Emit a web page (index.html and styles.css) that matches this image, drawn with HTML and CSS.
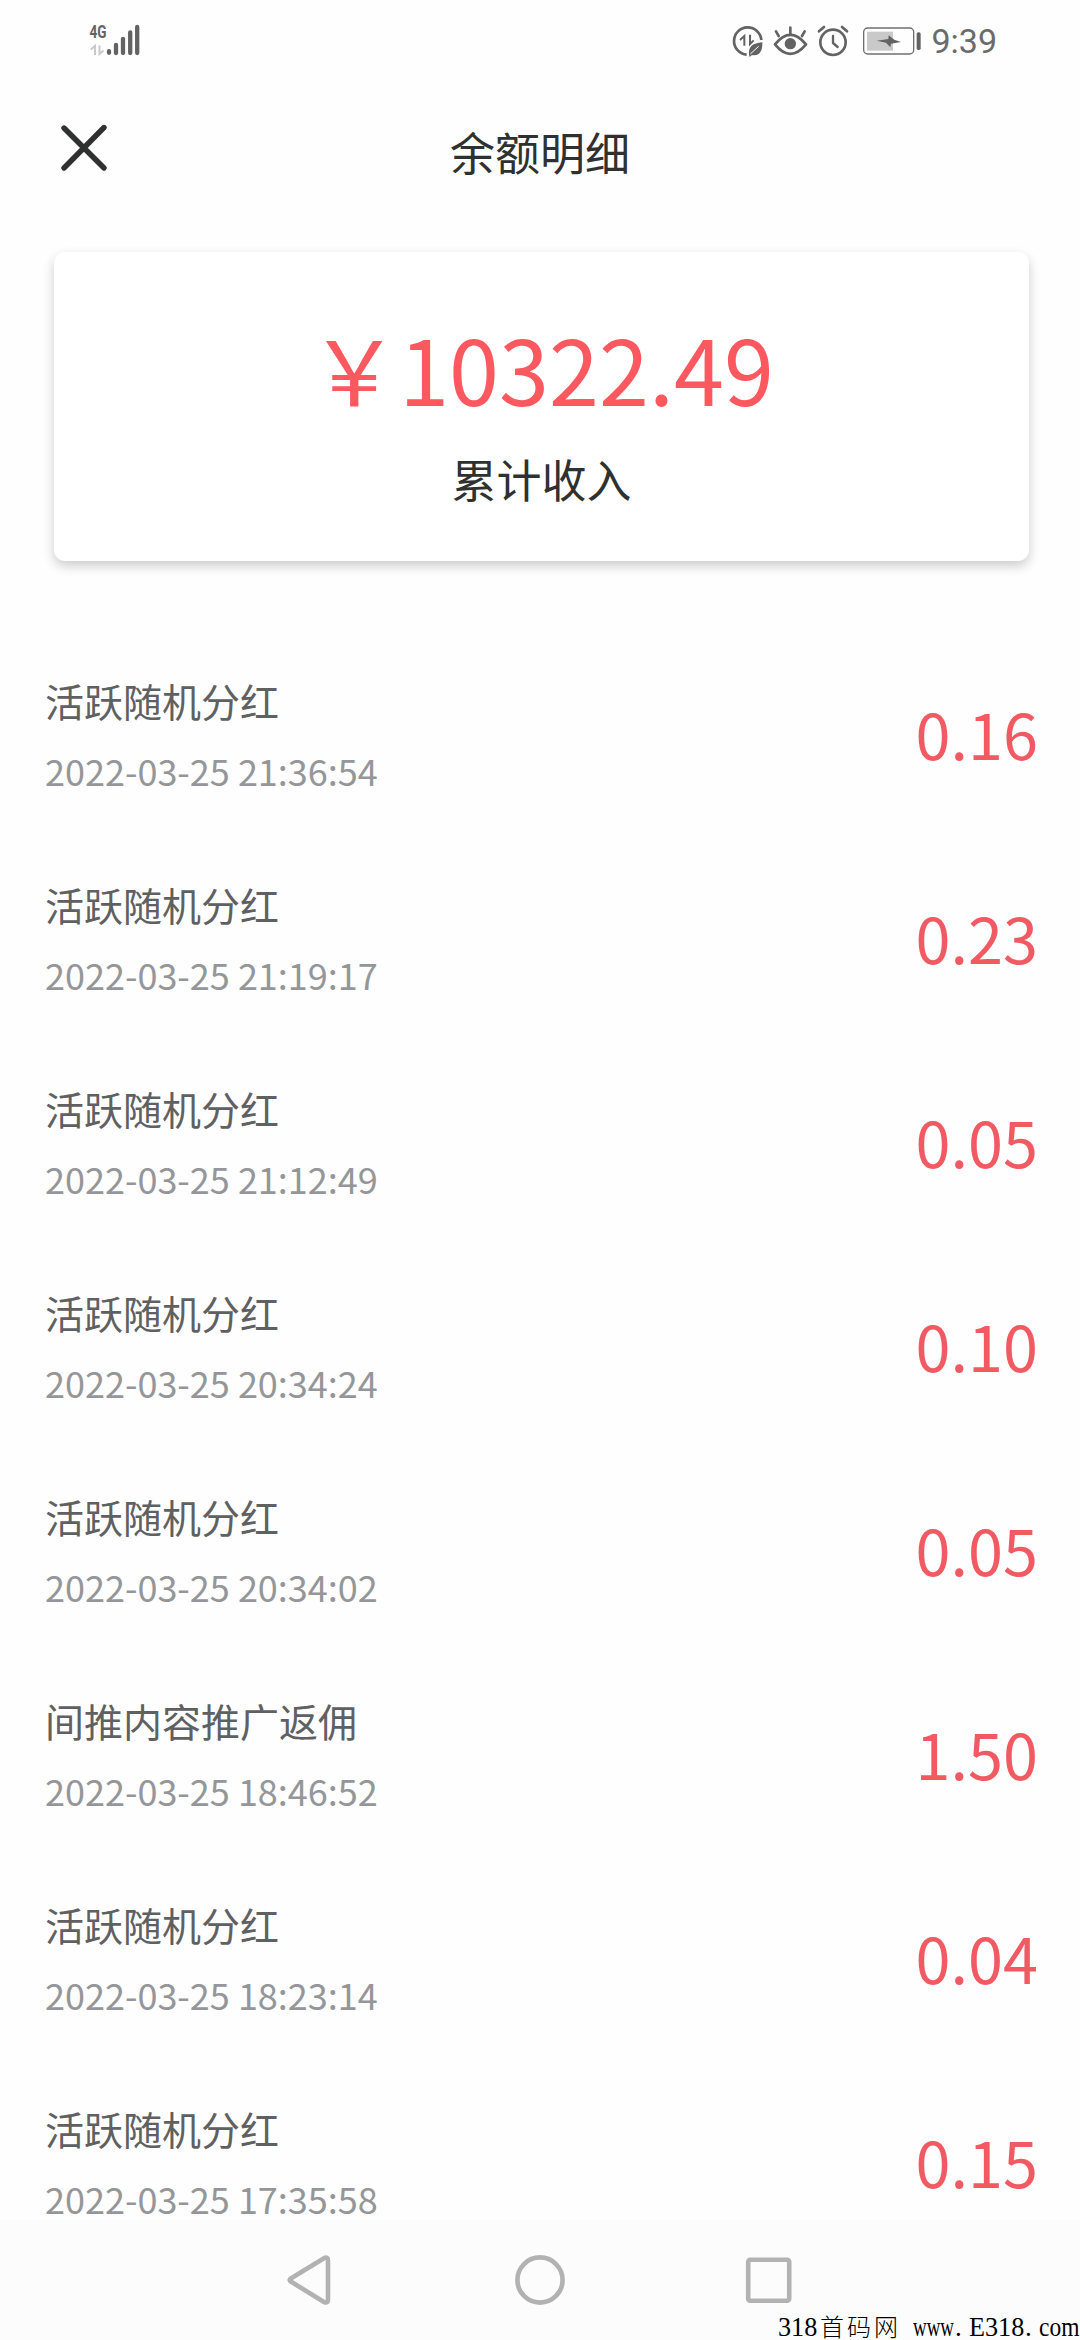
FILE: index.html
```html
<!DOCTYPE html>
<html lang="zh-CN">
<head>
<meta charset="utf-8">
<title>余额明细</title>
<link rel="stylesheet" href="styles.css">
</head>
<body>
<div class="screen">
  <div class="status">
    <svg class="signal" width="62" height="48" viewBox="83 16 62 48">
      <text x="89.5" y="38.4" class="net" textLength="17" lengthAdjust="spacingAndGlyphs">4G</text>
      <path d="M90.800 49.500L95 46V55M99.500 45.500V54L103.500 50.500" fill="none" stroke="#c9c9c9" stroke-width="2"/>
      <g stroke="#636363" stroke-width="4.300" stroke-linecap="round"><path d="M109 51.200v1.600M116 45v8M123 39v14M130.200 32.500v20.500M137.200 27v26"/></g>
    </svg>
    <div class="status-right">
      <svg width="33" height="33" viewBox="60 40 99 99" fill="none" stroke="#636363">
        <path d="M107 132a41 41 0 1 1 44-44" stroke-width="8"/>
        <path d="M87 88l13-12v29M117 72v28l11-11" stroke-width="6"/>
        <path d="M114 132c-2-22 8-34 40-37 1 27-9 42-31 38l-7 6z" fill="#636363" stroke="none"/>
        <path d="M118 130l25-23" stroke="#fff" stroke-width="3"/>
      </svg>
      <svg width="35" height="33" viewBox="186 40 105 99" fill="none" stroke="#636363">
        <path d="M192 101q46-57 93 0q-47 57-93 0z" stroke-width="8" stroke-linejoin="round"/>
        <circle cx="238" cy="99" r="17" fill="#636363" stroke="none"/>
        <path d="M238 51v18M195 62l8 14M281 62l-8 14" stroke-width="8" stroke-linecap="round"/>
      </svg>
      <svg width="32" height="33" viewBox="321 40 96 99" fill="none" stroke="#636363">
        <circle cx="369" cy="95" r="38" stroke-width="8"/>
        <path d="M369 76v21l14 12" stroke-width="7" stroke-linecap="round" stroke-linejoin="round"/>
        <path d="M327 62l15-13M411 62l-15-13" stroke-width="8" stroke-linecap="round"/>
      </svg>
      <svg class="battery" width="59" height="33" viewBox="459 40 177 99">
        <rect x="461" y="52" width="150" height="78" rx="12" fill="none" stroke="#707070" stroke-width="4"/>
        <rect x="471" y="63" width="78" height="57" fill="#c9c9c9"/>
        <path d="M500 90l35-5 1-11 17 13 20 7-30 5-2 11-13-14z" fill="#636363"/>
        <rect x="620" y="65" width="12" height="53" rx="5" fill="#636363"/>
      </svg>
      <span class="time">9:39</span>
    </div>
  </div>

  <header class="header">
    <svg class="close" width="50" height="50" viewBox="0 0 50 50"><path d="M5 5L45 45M45 4.500L5 45" stroke="#2f3131" stroke-width="5.400" stroke-linecap="round"/></svg>
    <h1 class="title">余额明细</h1>
  </header>

  <section class="card">
    <div class="total">￥10322.49</div>
    <div class="label">累计收入</div>
  </section>

  <main class="list">
    <div class="row"><div class="info"><div class="name">活跃随机分红</div><div class="date">2022-03-25 21:36:54</div></div><div class="amount">0.16</div></div>
    <div class="row"><div class="info"><div class="name">活跃随机分红</div><div class="date">2022-03-25 21:19:17</div></div><div class="amount">0.23</div></div>
    <div class="row"><div class="info"><div class="name">活跃随机分红</div><div class="date">2022-03-25 21:12:49</div></div><div class="amount">0.05</div></div>
    <div class="row"><div class="info"><div class="name">活跃随机分红</div><div class="date">2022-03-25 20:34:24</div></div><div class="amount">0.10</div></div>
    <div class="row"><div class="info"><div class="name">活跃随机分红</div><div class="date">2022-03-25 20:34:02</div></div><div class="amount">0.05</div></div>
    <div class="row"><div class="info"><div class="name">间推内容推广返佣</div><div class="date">2022-03-25 18:46:52</div></div><div class="amount">1.50</div></div>
    <div class="row"><div class="info"><div class="name">活跃随机分红</div><div class="date">2022-03-25 18:23:14</div></div><div class="amount">0.04</div></div>
    <div class="row"><div class="info"><div class="name">活跃随机分红</div><div class="date">2022-03-25 17:35:58</div></div><div class="amount">0.15</div></div>
  </main>

  <nav class="nav">
    <svg width="60" height="60" viewBox="0 0 60 60"><path d="M11.200 28.300Q8 30 11.200 31.800L44 52Q48 53.500 48 50V10Q48 6.500 44 8.200Z"/></svg>
    <svg width="60" height="60" viewBox="0 0 60 60"><circle cx="30" cy="30" r="22.600"/></svg>
    <svg width="60" height="60" viewBox="0 0 60 60"><rect x="8.200" y="9.700" width="41" height="41" rx="2"/></svg>
  </nav>
  <div class="mark"><span class="cell c318">318</span><span class="cell han">首码网</span><span class="cell www">www</span><span class="cell dot">.</span><span class="cell e318">E318</span><span class="cell dot">.</span><span class="cell com">com</span></div>
</div>
</body>
</html>
```
FILE: styles.css
```css
* { box-sizing: border-box; }
body {
  margin: 0;
  background: #fefefe;
  font-family: "Noto Sans CJK SC", sans-serif;
}
.screen {
  position: relative;
  display: flex;
  flex-direction: column;
  width: 1080px;
  height: 2340px;
  overflow: hidden;
}
.status {
  flex: none;
  display: flex;
  justify-content: space-between;
  align-items: center;
  height: 80px;
  padding: 0 83px;
}
.net {
  font: 700 18.500px Roboto, sans-serif;
  fill: #636363;
}
.status-right {
  display: flex;
  align-items: center;
  gap: 9px;
}
.battery { margin-left: 5px; }
.time {
  font: 400 34px/40px Roboto, sans-serif;
  color: #6b6b6b;
  padding-top: 2px;
}
.header {
  flex: none;
  display: grid;
  grid-template-columns: 100px 1fr 100px;
  align-items: center;
  height: 140px;
  padding: 0 59px;
}
.close { margin-top: -5px; }
.title {
  margin: 0;
  padding-top: 3px;
  font-size: 45px;
  font-weight: 400;
  line-height: 66px;
  color: #2f3131;
  text-align: center;
}
.card {
  flex: none;
  height: 309px;
  margin: 32px 51px 0 54px;
  padding-top: 50px;
  border-radius: 11px;
  background: #fff;
  box-shadow: 0 5px 12px rgba(0, 0, 0, .2);
  text-align: center;
}
.total {
  font-size: 90px;
  line-height: 130px;
  color: #fb5860;
}
.label {
  margin-top: 14px;
  font-size: 45px;
  line-height: 66px;
  color: #2f3131;
}
.list {
  flex: 1;
  min-height: 0;
  margin-top: 72px;
  overflow: hidden;
}
.row {
  display: flex;
  justify-content: space-between;
  height: 204px;
  padding: 38px 42px 0 45px;
}
.name {
  font-size: 39px;
  line-height: 58px;
  color: #5f6061;
}
.date {
  margin-top: 21px;
  font-size: 36px;
  line-height: 40px;
  color: #949699;
}
.amount {
  margin-top: 16px;
  font-size: 63px;
  line-height: 92px;
  color: #f25a63;
}
.nav {
  flex: none;
  display: flex;
  justify-content: center;
  align-items: center;
  gap: 170px;
  height: 120px;
  background: #fcfcfc;
}
.nav svg {
  fill: none;
  stroke: #b2b2b2;
  stroke-width: 4.600;
  stroke-linejoin: round;
}
.mark {
  position: absolute;
  right: 0;
  bottom: 0;
  display: flex;
  align-items: baseline;
  font: 27px/26px "Liberation Serif", serif;
  color: #000;
}
.cell {
  flex: none;
  white-space: nowrap;
  transform-origin: left center;
}
.c318 { width: 42px; transform: scaleX(.97); }
.han {
  width: 93px;
  font: 300 24px/24px "Noto Sans CJK SC", sans-serif;
  letter-spacing: 3px;
}
.www { width: 42px; transform: scaleX(.7); }
.dot { width: 14px; }
.e318 { width: 56px; transform: scaleX(.97); }
.com { width: 41px; transform: scaleX(.87); }
```
